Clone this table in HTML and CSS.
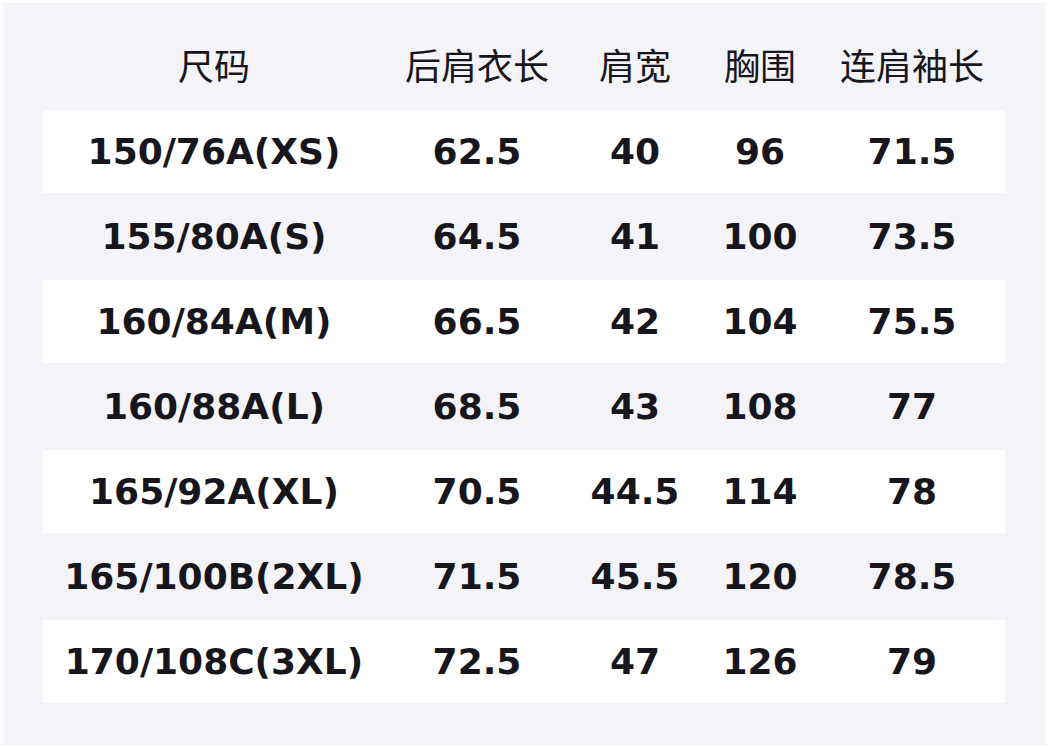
FILE: index.html
```html
<!DOCTYPE html>
<html lang="zh">
<head>
<meta charset="utf-8">
<title>尺码表</title>
<link rel="stylesheet" href="styles.css">
</head>
<body>
<div class="page">
  <div class="table">
    <div class="row head">
      <div>尺码</div><div>后肩衣长</div><div>肩宽</div><div>胸围</div><div>连肩袖长</div>
    </div>
    <div class="row white">
      <div>150/76A(XS)</div><div>62.5</div><div>40</div><div>96</div><div>71.5</div>
    </div>
    <div class="row">
      <div>155/80A(S)</div><div>64.5</div><div>41</div><div>100</div><div>73.5</div>
    </div>
    <div class="row white">
      <div>160/84A(M)</div><div>66.5</div><div>42</div><div>104</div><div>75.5</div>
    </div>
    <div class="row">
      <div>160/88A(L)</div><div>68.5</div><div>43</div><div>108</div><div>77</div>
    </div>
    <div class="row white">
      <div>165/92A(XL)</div><div>70.5</div><div>44.5</div><div>114</div><div>78</div>
    </div>
    <div class="row">
      <div>165/100B(2XL)</div><div>71.5</div><div>45.5</div><div>120</div><div>78.5</div>
    </div>
    <div class="row white">
      <div>170/108C(3XL)</div><div>72.5</div><div>47</div><div>126</div><div>79</div>
    </div>
  </div>
</div>
</body>
</html>
```
FILE: styles.css
```css
html, body {
  margin: 0;
  padding: 0;
  background: #ffffff;
}
body {
  width: 1048px;
  height: 748px;
  overflow: hidden;
  font-family: "DejaVu Sans", "Noto Sans CJK SC", sans-serif;
  color: #16161c;
}
.page {
  margin: 3px;
  height: 742px;
  box-sizing: border-box;
  padding: 22px 40px 41px;
  background: #f3f3f8;
}
.table {
  width: 962px;
  display: flex;
  flex-direction: column;
}
.row {
  display: grid;
  grid-template-columns: 342px 184px 132px 118px 186px;
  height: 85px;
  align-items: center;
  text-align: center;
  font-size: 36px;
  font-weight: bold;
  line-height: 1;
}
.row.head {
  height: 84px;
  box-sizing: border-box;
  padding-bottom: 6px;
  font-weight: normal;
  font-family: "Noto Sans CJK SC", "DejaVu Sans", sans-serif;
}
.row.white {
  height: 83px;
  margin: 1px 0;
  background: #ffffff;
}
```
